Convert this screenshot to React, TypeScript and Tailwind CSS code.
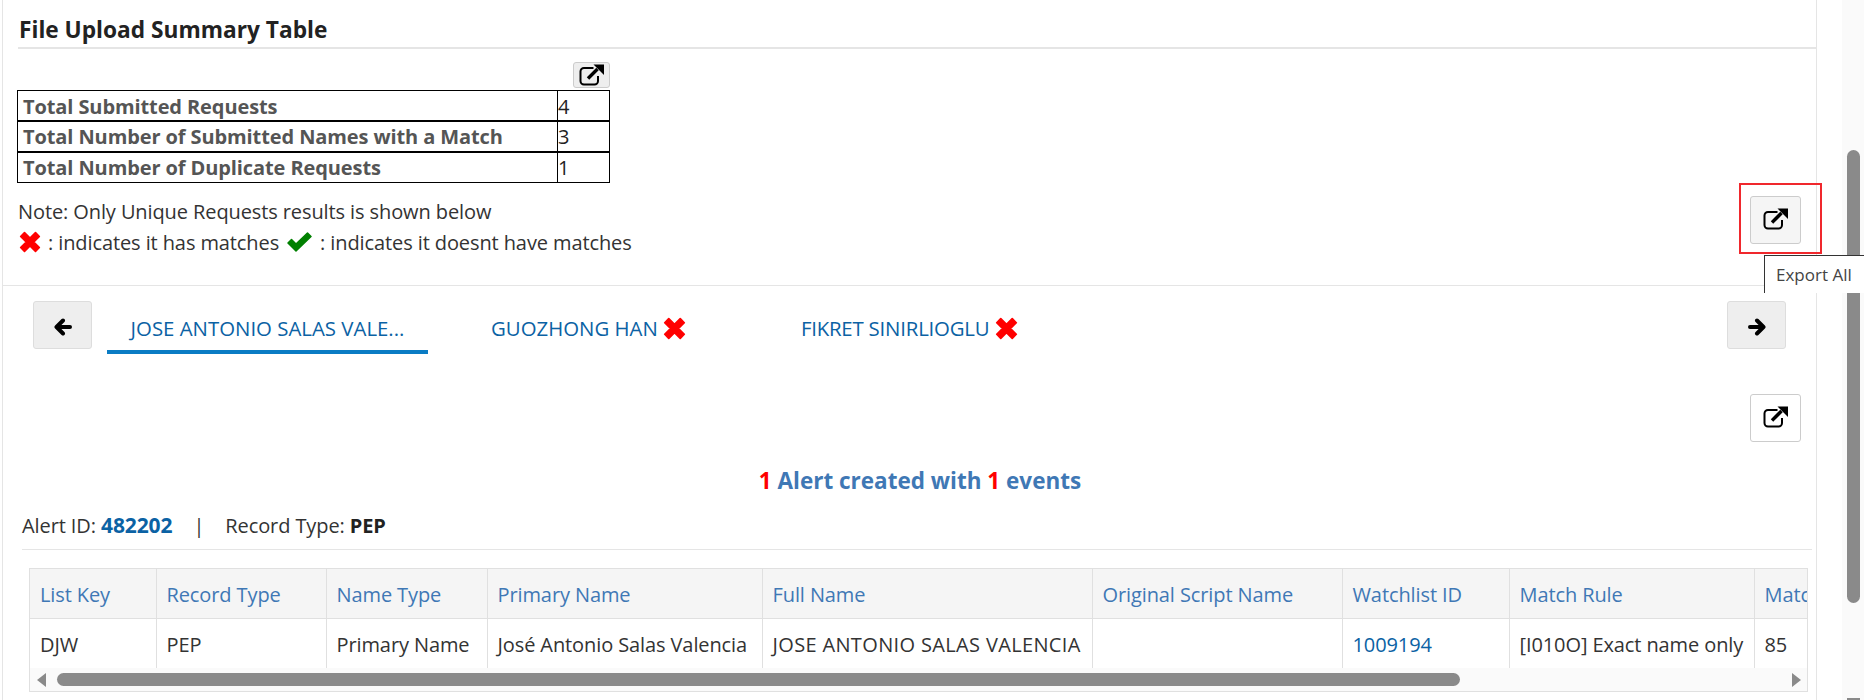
import React from 'react';

const font = "font-['Open_Sans','Liberation_Sans',sans-serif]";

const ExportIcon = ({ className }: { className?: string }) => (
  <svg viewBox="0 0 26 22" className={className}>
    <path d="M15 4H5.500A3.500 3.500 0 0 0 2 7.500V17a3.500 3.500 0 0 0 3.500 3.500H16a3.500 3.500 0 0 0 3.500-3.500v-5" fill="none" stroke="currentColor" strokeWidth="2" />
    <path d="M9.500 14.500L19 5" fill="none" stroke="currentColor" strokeWidth="3.400" />
    <path d="M15 0.500H25.500V11z" fill="currentColor" />
  </svg>
);

const CrossIcon = ({ className }: { className?: string }) => (
  <svg viewBox="0 0 20 20" className={className}>
    <path d="M1.500 5L5 1.500 10 6.500 15 1.500 18.500 5 13.500 10 18.500 15 15 18.500 10 13.500 5 18.500 1.500 15 6.500 10z" fill="#ff0000" stroke="#ff0000" strokeWidth="1.500" strokeLinejoin="round" />
  </svg>
);

const CheckIcon = ({ className }: { className?: string }) => (
  <svg viewBox="0 0 26 20" className={className}>
    <path d="M1.500 11L5 7.500 9.500 12 21 1 24.500 4.500 9.500 19z" fill="#008000" stroke="#008000" strokeWidth="1.500" strokeLinejoin="round" />
  </svg>
);

const ArrowIcon = ({ flip }: { flip?: boolean }) => (
  <svg viewBox="0 0 18 18" className={`h-[18px] w-[18px] ${flip ? 'rotate-180' : ''}`}>
    <path d="M9 2.500L2.500 9 9 15.500M3.500 9H16" fill="none" stroke="#000" strokeWidth="4" strokeLinejoin="round" strokeLinecap="round" />
  </svg>
);

const columns = [
  { title: 'List Key', value: 'DJW', width: 'w-[126px]' },
  { title: 'Record Type', value: 'PEP', width: 'w-[170px]' },
  { title: 'Name Type', value: 'Primary Name', width: 'w-[161px]' },
  { title: 'Primary Name', value: 'José Antonio Salas Valencia', width: 'w-[275px]' },
  { title: 'Full Name', value: 'JOSE ANTONIO SALAS VALENCIA', width: 'w-[330px]', cell: 'tracking-[0.35px] text-[#333]' },
  { title: 'Original Script Name', value: '', width: 'w-[250px]' },
  { title: 'Watchlist ID', value: '1009194', width: 'w-[167px]', cell: 'text-[#0b62a4]' },
  { title: 'Match Rule', value: '[I010O] Exact name only', width: 'w-[245px]' },
  { title: 'Match Score', value: '85', width: 'w-[120px]' },
];

const summary = [
  { label: 'Total Submitted Requests', value: '4' },
  { label: 'Total Number of Submitted Names with a Match', value: '3' },
  { label: 'Total Number of Duplicate Requests', value: '1' },
];

export default function App() {
  return (
    <div className={`${font} relative flex h-[700px] w-[1864px] overflow-hidden bg-white text-[20px] tracking-[-0.1px] text-[#333]`}>
      {/* Main panel */}
      <div className="ml-[2px] h-full w-[1815px] border-x border-[#e5e5e5]">
        <h2 className="ml-[15px] flex h-[49px] items-center border-b-2 border-[#e5e5e5] pl-[1px] pt-[14px] text-[22.700px] font-bold tracking-normal text-[#222]">
          File Upload Summary Table
        </h2>

        <div className="relative h-[237px] border-b border-[#e5e5e5] pl-[14px]">
          <div className="flex w-[593px] justify-end pt-[13px]">
            <button className="flex h-[26px] w-[37px] items-center justify-center rounded-[3px] border border-[#ccc] bg-[#eee] text-black">
              <ExportIcon className="h-[22px] w-[27px]" />
            </button>
          </div>
          <table className="mt-[2px] w-[593px] border-collapse">
            <tbody>
              {summary.map((row) => (
                <tr key={row.label} className="h-[30.500px] border-b-2 border-black last:border-b">
                  <td className="w-[540px] border border-black pl-[5px] pt-[2px] font-bold leading-none text-[#555]">{row.label}</td>
                  <td className="border border-black pt-[2px] leading-none text-[#222]">{row.value}</td>
                </tr>
              ))}
            </tbody>
          </table>
          <p className="mt-[14px] pl-[1px] leading-[30px]">Note: Only Unique Requests results is shown below</p>
          <div className="flex items-center gap-[7px] pl-[2px] leading-[31px]">
            <CrossIcon className="h-[22px] w-[22px]" />
            <span>: indicates it has matches</span>
            <CheckIcon className="h-[20px] w-[27px]" />
            <span>: indicates it doesnt have matches</span>
          </div>

          {/* Export all, highlighted */}
          <div className="absolute left-[1736px] top-[134px] flex h-[71px] w-[83px] items-start border-2 border-[#f0282d] pl-[9px] pt-[11px]">
            <button className="flex h-[48px] w-[51px] items-center justify-center rounded-[3px] border border-[#ccc] bg-[#f5f5f5] pb-[3px] text-black">
              <ExportIcon className="h-[22px] w-[27px]" />
            </button>
          </div>
        </div>

        {/* Request tabs */}
        <div className="flex items-start px-[30px] pt-[15px]">
          <button className="flex h-[48px] w-[59px] items-center justify-center rounded-[3px] border border-[#ddd] bg-[#eee] pt-[3px]">
            <ArrowIcon />
          </button>
          <div className="ml-[15px] flex h-[53px] w-[321px] justify-center border-b-4 border-[#0a7cc4] pt-[12px] text-[20.400px] tracking-normal text-[#0b62a4]">
            JOSE ANTONIO SALAS VALE...
          </div>
          <div className="ml-[63px] flex items-center gap-[5px] pt-[12px] text-[20.400px] tracking-normal text-[#0b62a4]">
            GUOZHONG HAN <CrossIcon className="h-[23px] w-[23px]" />
          </div>
          <div className="ml-[115px] flex items-center gap-[6px] pt-[12px] text-[20.400px] tracking-[-0.2px] text-[#0b62a4]">
            FIKRET SINIRLIOGLU <CrossIcon className="h-[23px] w-[23px]" />
          </div>
          <button className="ml-auto flex h-[48px] w-[59px] items-center justify-center rounded-[3px] border border-[#ddd] bg-[#eee] pt-[3px]">
            <ArrowIcon flip />
          </button>
        </div>

        <div className="flex justify-end pr-[15px] pt-[40px]">
          <button className="flex h-[48px] w-[51px] items-center justify-center rounded-[3px] border border-[#ccc] bg-white pb-[3px] text-black">
            <ExportIcon className="h-[22px] w-[27px]" />
          </button>
        </div>

        <h3 className="pl-[21px] pt-[23px] text-center text-[22.500px] font-bold leading-[32px] tracking-normal text-[#3f78b5]">
          <span className="text-[#ff0000]">1</span> Alert created with <span className="text-[#ff0000]">1</span> events
        </h3>

        <div className="ml-[19px] mr-[4px] mt-[7px] flex h-[46px] items-center border-b border-[#e5e5e5] pb-[2px]">
          <span>Alert ID: <b className="text-[21px] text-[#0b62a4]">482202</b></span>
          <span className="mx-[21px]">|</span>
          <span>Record Type: <b className="text-[#222]">PEP</b></span>
        </div>

        {/* Results table */}
        <div className="ml-[26px] mt-[18px] w-[1779px] border border-[#e0e0e0]">
          <div className="overflow-hidden">
            <table className="w-max table-fixed border-collapse">
              <thead>
                <tr className="h-[49px] border-b border-[#e0e0e0] bg-[#f5f5f5]">
                  {columns.map((col) => (
                    <th key={col.title} className={`${col.width} whitespace-nowrap border-r border-[#e0e0e0] pl-[10px] pt-[4px] text-left font-normal text-[#3f78b5]`}>
                      {col.title}
                    </th>
                  ))}
                </tr>
              </thead>
              <tbody>
                <tr className="h-[50px]">
                  {columns.map((col) => (
                    <td key={col.title} className={`whitespace-nowrap border-r border-[#e0e0e0] pl-[10px] pt-[4px] ${col.cell ?? 'text-[#333]'}`}>
                      {col.value}
                    </td>
                  ))}
                </tr>
              </tbody>
            </table>
          </div>
          <div className="flex h-[23px] items-center bg-[#fafafa] pl-[7px] pr-[6px]">
            <span className="h-0 w-0 border-y-[7px] border-r-[9px] border-y-transparent border-r-[#8a8a8a]" />
            <span className="ml-[11px] h-[13px] w-[1403px] rounded-full bg-[#8a8a8a]" />
            <span className="ml-auto h-0 w-0 border-y-[7px] border-l-[9px] border-y-transparent border-l-[#8a8a8a]" />
          </div>
        </div>
      </div>

      {/* Page scrollbar */}
      <div className="ml-[25px] flex h-full w-[22px] flex-col bg-[#fafafa] pl-[5px] pr-[4px] pt-[150px]">
        <div className="h-[453px] rounded-full bg-[#8a8a8a]" />
        <div className="mt-[95px] h-[2px] bg-[#8a8a8a]" />
      </div>

      {/* Tooltip */}
      <div className="absolute left-[1764px] top-[255px] flex h-[38px] w-[100px] items-center border-l border-t border-[#333] bg-white pl-[11px] text-[17px] tracking-normal text-[#444]">
        Export All
      </div>
    </div>
  );
}
